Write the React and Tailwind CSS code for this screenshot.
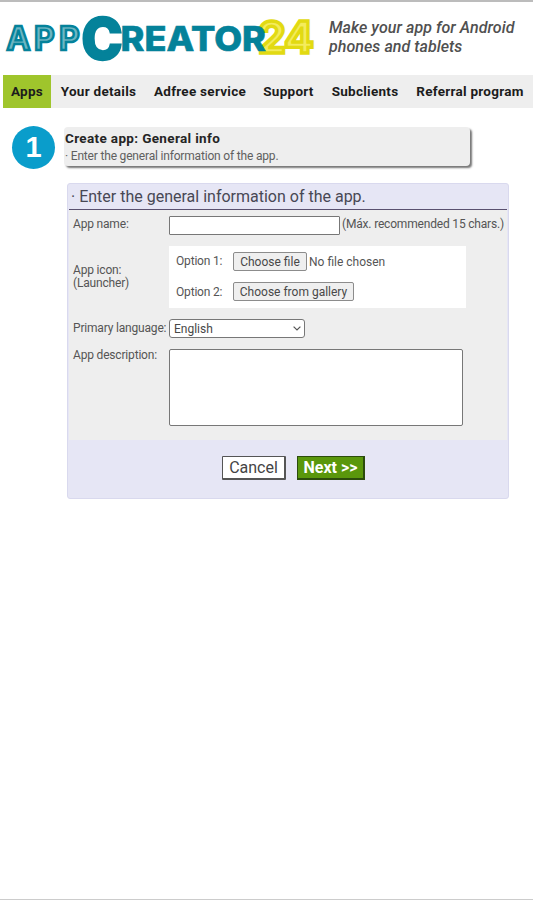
import React, { useState } from "react";

const tabs = [
  { label: "Apps", style: "w-12 bg-[#9fc52c]" },
  { label: "Your details", style: "w-[95px]" },
  { label: "Adfree service", style: "w-[108px]" },
  { label: "Support", style: "w-[69px]" },
  { label: "Subclients", style: "w-[84px]" },
  { label: "Referral program", style: "w-[126px]" },
];

const Logo = () => (
  <svg width="316" height="56" viewBox="0 0 316 56" className="block shrink-0 overflow-visible font-['Inter',sans-serif]">
    <text x="258 284" y="42.5" fontSize="44.5" fontWeight="700" fill="#f4ec5c" stroke="#e2da12" strokeWidth="3.4">
      24
    </text>
    {/* dark stroke, light fill: leaves a light line inside each letter */}
    <text x="6.5 34 59" y="40.2" fontSize="32" fontWeight="700" fill="#6db6c3" stroke="#04829a" strokeWidth="2.4">
      APP
    </text>
    <text x="81.5" y="48.5" fontSize="57" fontWeight="800" fill="#04829a" stroke="#04829a" strokeWidth="2.5" textLength="41" lengthAdjust="spacingAndGlyphs">
      C
    </text>
    <text x="120.5" y="41" fontSize="34" fontWeight="800" fill="#04829a" stroke="#04829a" strokeWidth="0.6" textLength="145.5" lengthAdjust="spacingAndGlyphs">
      REATOR
    </text>
  </svg>
);

const Header = () => (
  <header className="flex h-[73px] border-t-2 border-[#bcbcbc] pt-2">
    <Logo />
    <p className="ml-[13px] mt-[9px] text-[16px] leading-[18.5px] font-medium italic tracking-[0.05px] text-[#505050] whitespace-nowrap">
      Make your app for Android
      <br />
      phones and tablets
    </p>
  </header>
);

const Nav = ({ active, setActive }) => (
  <nav className="ml-[3px] mt-[2px] flex h-[33px] bg-[#eeeeee]">
    {tabs.map((tab) => (
      <button
        key={tab.label}
        onClick={() => setActive(tab.label)}
        aria-current={active === tab.label}
        className={`${tab.style} h-full shrink-0 text-[13.5px] font-bold tracking-[0.27px] text-[#1c1c1c] whitespace-nowrap`}
      >
        {tab.label}
      </button>
    ))}
  </nav>
);

const StepTitle = () => (
  <div className="ml-3 mt-[18px] flex h-[44px]">
    <div className="flex size-[43px] shrink-0 items-center justify-center rounded-full bg-[#0a9dcb] font-['Liberation_Sans',sans-serif] text-[29px] font-bold text-white">
      1
    </div>
    <div className="ml-[9px] mt-[1px] h-[39px] w-[406px] rounded-[4px] bg-[#eeeeee] pl-[1px] shadow-[2px_2px_2px_#777]">
      <h1 className="pt-[3px] text-[13.5px] leading-[16px] font-bold tracking-[0.35px] text-[#252525]">Create app: General info</h1>
      <p className="mt-[2px] text-[12px] leading-[16px] tracking-[-0.18px] text-[#606060]">· Enter the general information of the app.</p>
    </div>
  </div>
);

const smallButton =
  "h-[19px] rounded-[2px] border border-[#8c8c8c] bg-[#efefef] text-[12px] leading-[16px] tracking-normal text-[#484848] whitespace-nowrap";

const AppForm = () => {
  const [app, setApp] = useState({
    name: "",
    language: "English",
    description: "",
  });

  return (
    <form
      onSubmit={(e) => e.preventDefault()}
      className="ml-[67px] mt-[13px] h-[316px] w-[442px] rounded-[3px] border border-[#d9d9ee] bg-[#e6e6f5] px-[1px] text-[12px] tracking-[-0.18px] text-[#555]"
    >
      <h2 className="h-[26px] border-b border-[#59506f] pl-[2px] text-[16px] leading-[25px] tracking-normal text-[#484854]">
        · Enter the general information of the app.
      </h2>
      <div className="h-[230px] bg-[#eeeeee] pl-[4px]">
        <div className="flex h-[36px] pt-[6px]">
          <label htmlFor="name" className="w-[96px] shrink-0 leading-[17px]">App name:</label>
          <input
            id="name"
            type="text"
            value={app.name}
            onChange={(e) => setApp({ ...app, name: e.target.value })}
            className="h-[19px] w-[171px] shrink-0 rounded-[1px] border border-[#777] bg-white px-1"
          />
          <span className="ml-[2px] leading-[17px] whitespace-nowrap">(Máx. recommended 15 chars.)</span>
        </div>
        <div className="flex h-[62px]">
          <div className="w-[96px] shrink-0 pt-[18px] leading-[13px]">
            App icon:
            <br />
            (Launcher)
          </div>
          <div className="h-[62px] w-[297px] bg-white pl-[7px] pt-[6px]">
            <div className="flex items-start">
              <span className="w-[57px] leading-[18px]">Option 1:</span>
              <button type="button" className={`${smallButton} w-[74px]`}>Choose file</button>
              <span className="ml-[2px] text-[12px] leading-[20px] tracking-normal">No file chosen</span>
            </div>
            <div className="mt-[10px] flex items-start">
              <span className="w-[57px] leading-[20px]">Option 2:</span>
              <button type="button" className={`${smallButton} w-[121px]`}>Choose from gallery</button>
            </div>
          </div>
        </div>
        <div className="flex h-[30px] pt-[11px]">
          <label htmlFor="language" className="w-[96px] shrink-0 leading-[18px] whitespace-nowrap">Primary language:</label>
          <div className="grid h-[19px] w-[136px] shrink-0">
            <select
              id="language"
              value={app.language}
              onChange={(e) => setApp({ ...app, language: e.target.value })}
              className="col-start-1 row-start-1 appearance-none rounded-[3px] border border-[#777] bg-white pl-[4px] text-[12px] leading-[16px] tracking-normal text-[#484848]"
            >
              <option>English</option>
            </select>
            <svg viewBox="0 0 8 5" className="pointer-events-none col-start-1 row-start-1 mr-[4px] h-[5px] w-[8px] self-center justify-self-end" fill="none" stroke="#555" strokeWidth="1.2">
              <path d="M.6.6 4 4 7.4.6" />
            </svg>
          </div>
        </div>
        <div className="flex pt-[11px]">
          <label htmlFor="description" className="w-[96px] shrink-0 leading-[13px]">App description:</label>
          <textarea
            id="description"
            value={app.description}
            onChange={(e) => setApp({ ...app, description: e.target.value })}
            className="h-[77px] w-[294px] resize-none rounded-[2px] border border-[#777] bg-white p-1"
          />
        </div>
      </div>
      <div className="flex pl-[153px] pt-[16px] text-[16px] leading-[20px] tracking-normal">
        <button type="button" className="h-[24px] w-[64px] rounded-[1px] border border-r-2 border-b-2 border-[#555] bg-white text-[#444]">
          Cancel
        </button>
        <button type="submit" className="ml-[11px] h-[24px] w-[68px] border border-r-2 border-b-2 border-[#2c4c0c] bg-[#5a970c] font-bold text-white">
          Next &gt;&gt;
        </button>
      </div>
    </form>
  );
};

const App = () => {
  const [active, setActive] = useState("Apps");

  return (
    <div className="flex h-[900px] w-[533px] flex-col overflow-hidden border-b border-[#cccccc] bg-white font-['Roboto',sans-serif]">
      <Header />
      <Nav active={active} setActive={setActive} />
      <StepTitle />
      <AppForm />
    </div>
  );
};

export default App;
